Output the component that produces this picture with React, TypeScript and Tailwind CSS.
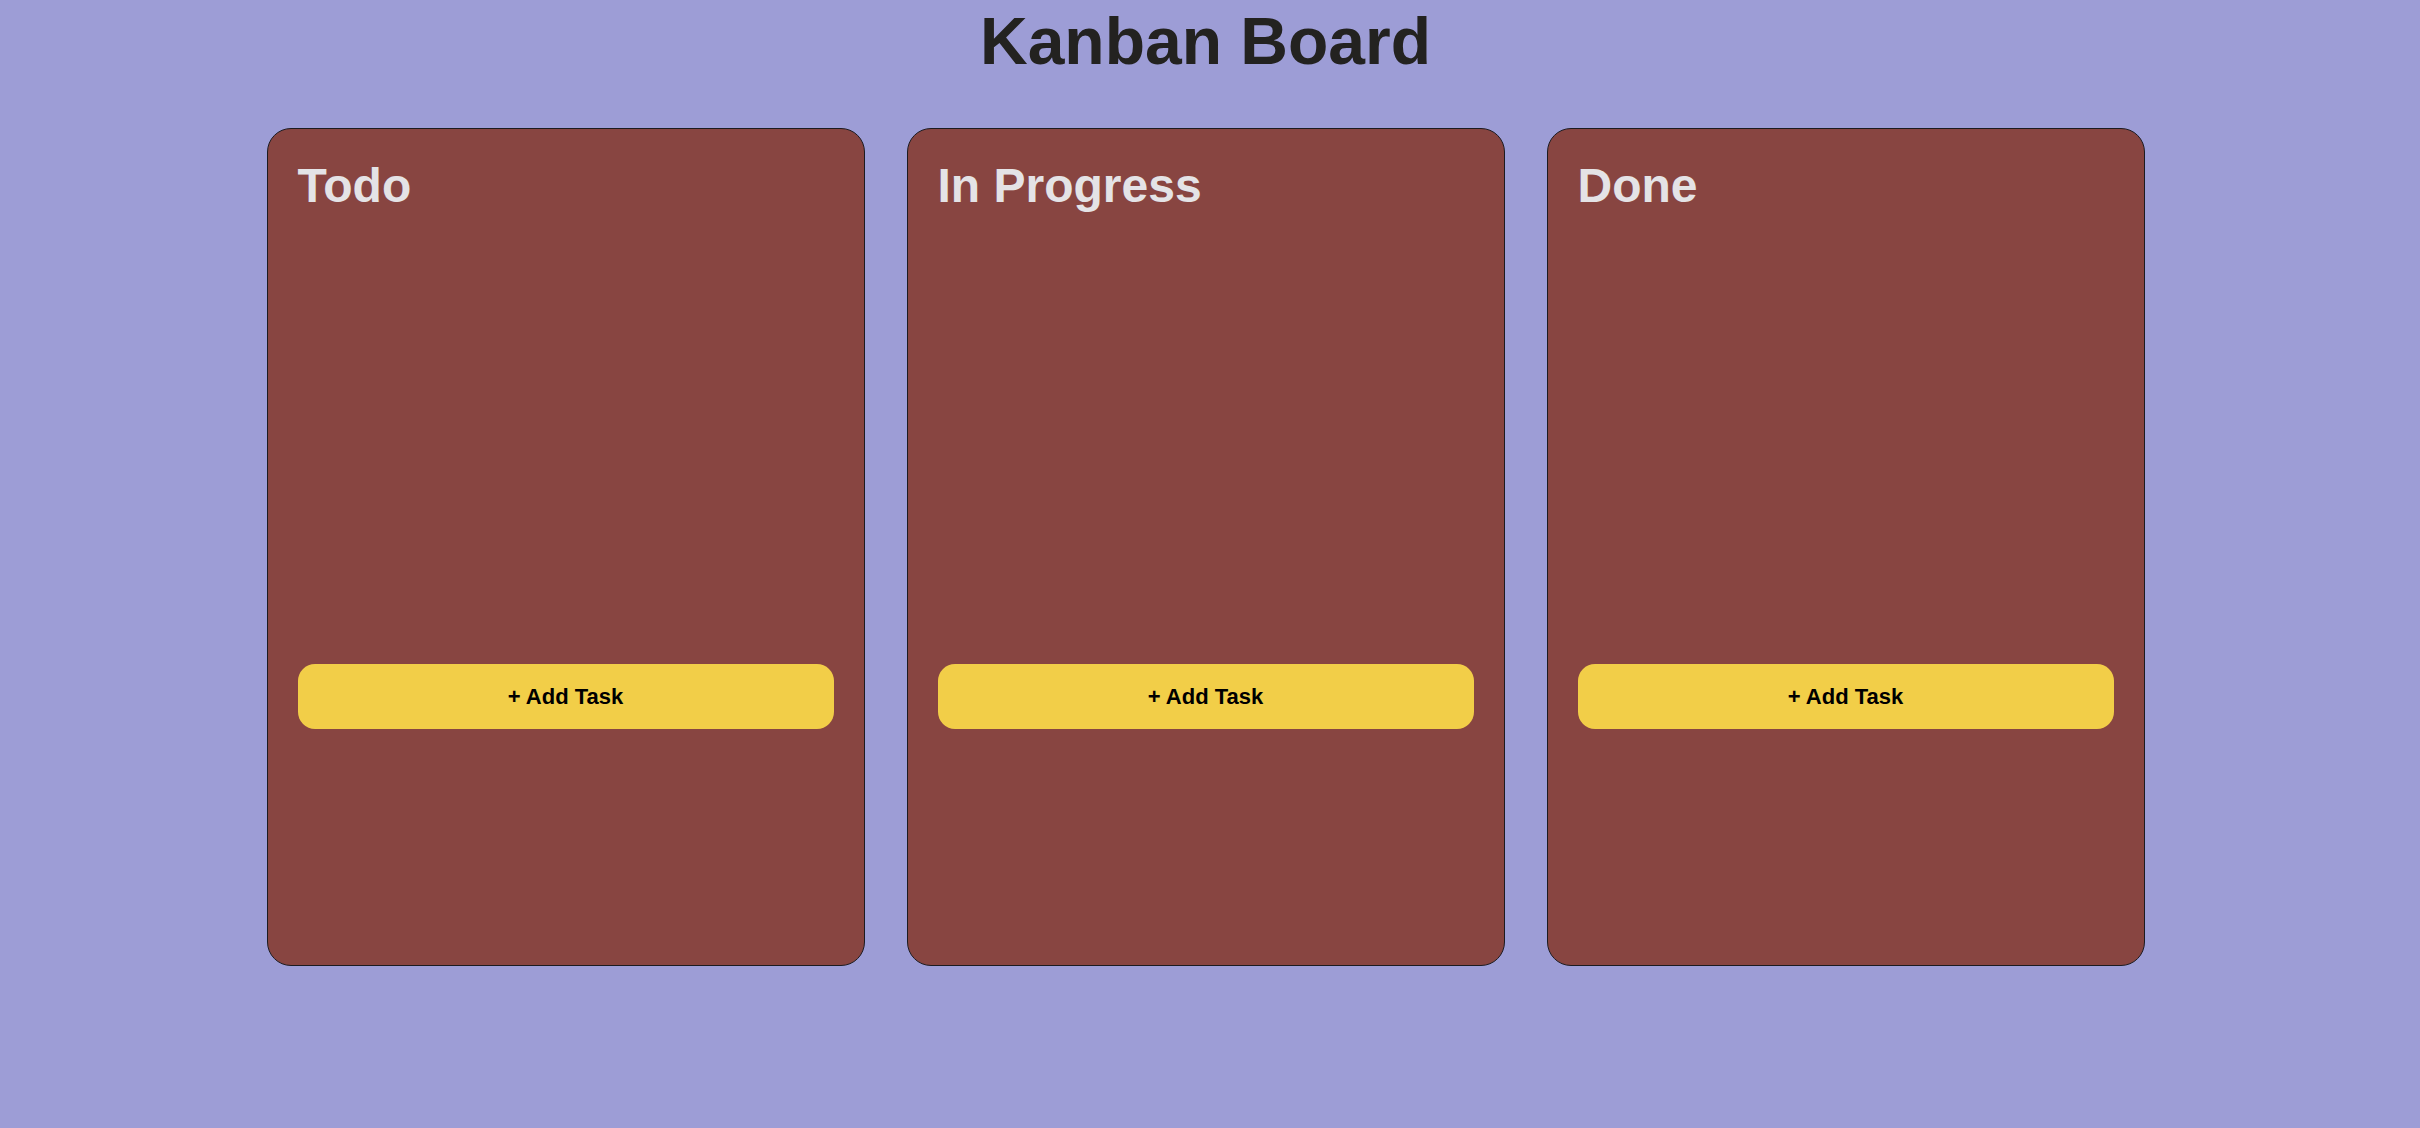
import React from 'react';

const columns = [
  { id: 'todo', title: 'Todo' },
  { id: 'progress', title: 'In Progress' },
  { id: 'done', title: 'Done' },
];

function Column({ title }: { title: string }) {
  return (
    <div className="box-border w-[598px] h-[838px] rounded-[24px] border border-[#1c1b20] bg-[#884541] p-[30px] flex flex-col">
      <h2 className="m-0 text-[48px] leading-[54px] font-bold text-[#e4e3e6]">{title}</h2>
      {/* task list */}
      <div className="h-[451px]" />
      <button className="w-full h-[65px] rounded-[17px] bg-[#f2ce48] text-[22px] font-bold text-black">
        + Add Task
      </button>
    </div>
  );
}

export default function App() {
  return (
    <div className="min-h-screen w-full bg-[#9d9dd6] pr-[9px] font-['Liberation_Sans',Arial,sans-serif]">
      <h1 className="m-0 pt-[4px] text-center text-[66px] leading-[74px] font-bold text-[#232220]">
        Kanban Board
      </h1>
      <div className="mt-[50px] flex justify-center gap-[42px]">
        {columns.map((col) => (
          <Column key={col.id} title={col.title} />
        ))}
      </div>
    </div>
  );
}
